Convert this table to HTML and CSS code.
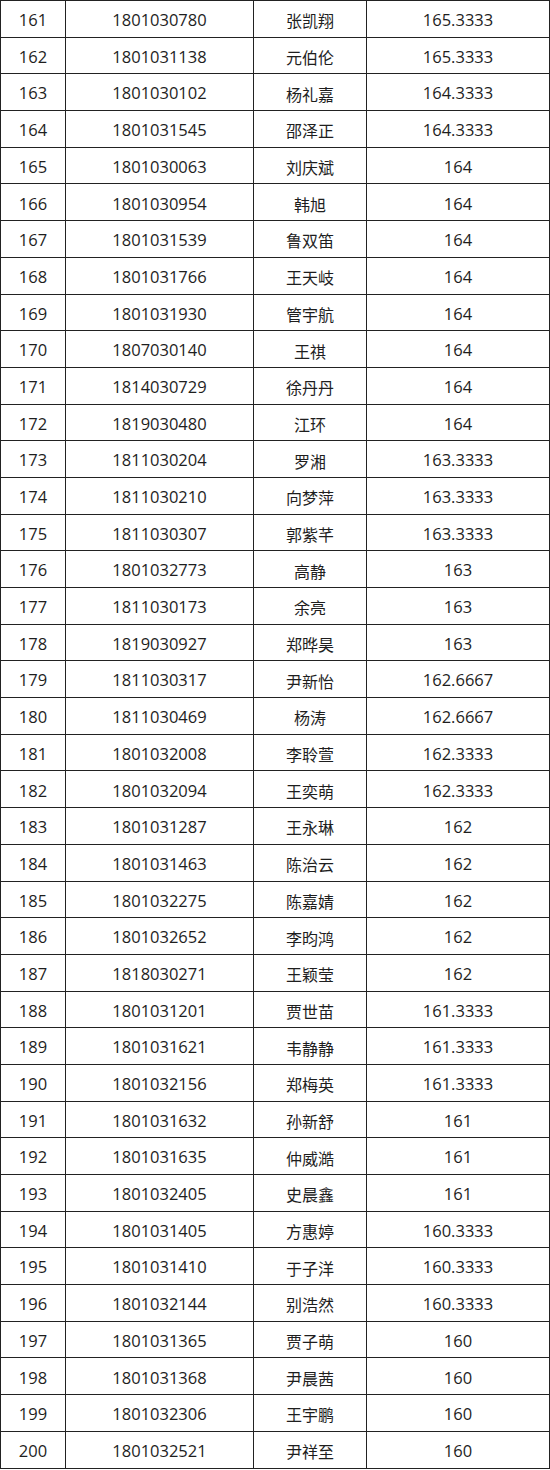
FILE: index.html
```html
<!DOCTYPE html>
<html lang="zh">
<head>
<meta charset="utf-8">
<link rel="stylesheet" href="styles.css">
</head>
<body>
<table class="score-table">
<colgroup>
<col class="c-rank"><col class="c-id"><col class="c-name"><col class="c-score">
</colgroup>
<tbody>
<tr><td>161</td><td>1801030780</td><td>张凯翔</td><td>165.3333</td></tr>
<tr><td>162</td><td>1801031138</td><td>元伯伦</td><td>165.3333</td></tr>
<tr><td>163</td><td>1801030102</td><td>杨礼嘉</td><td>164.3333</td></tr>
<tr><td>164</td><td>1801031545</td><td>邵泽正</td><td>164.3333</td></tr>
<tr><td>165</td><td>1801030063</td><td>刘庆斌</td><td>164</td></tr>
<tr><td>166</td><td>1801030954</td><td>韩旭</td><td>164</td></tr>
<tr><td>167</td><td>1801031539</td><td>鲁双笛</td><td>164</td></tr>
<tr><td>168</td><td>1801031766</td><td>王天岐</td><td>164</td></tr>
<tr><td>169</td><td>1801031930</td><td>管宇航</td><td>164</td></tr>
<tr><td>170</td><td>1807030140</td><td>王祺</td><td>164</td></tr>
<tr><td>171</td><td>1814030729</td><td>徐丹丹</td><td>164</td></tr>
<tr><td>172</td><td>1819030480</td><td>江环</td><td>164</td></tr>
<tr><td>173</td><td>1811030204</td><td>罗湘</td><td>163.3333</td></tr>
<tr><td>174</td><td>1811030210</td><td>向梦萍</td><td>163.3333</td></tr>
<tr><td>175</td><td>1811030307</td><td>郭紫芊</td><td>163.3333</td></tr>
<tr><td>176</td><td>1801032773</td><td>高静</td><td>163</td></tr>
<tr><td>177</td><td>1811030173</td><td>余亮</td><td>163</td></tr>
<tr><td>178</td><td>1819030927</td><td>郑晔昊</td><td>163</td></tr>
<tr><td>179</td><td>1811030317</td><td>尹新怡</td><td>162.6667</td></tr>
<tr><td>180</td><td>1811030469</td><td>杨涛</td><td>162.6667</td></tr>
<tr><td>181</td><td>1801032008</td><td>李聆萱</td><td>162.3333</td></tr>
<tr><td>182</td><td>1801032094</td><td>王奕萌</td><td>162.3333</td></tr>
<tr><td>183</td><td>1801031287</td><td>王永琳</td><td>162</td></tr>
<tr><td>184</td><td>1801031463</td><td>陈治云</td><td>162</td></tr>
<tr><td>185</td><td>1801032275</td><td>陈嘉婧</td><td>162</td></tr>
<tr><td>186</td><td>1801032652</td><td>李昀鸿</td><td>162</td></tr>
<tr><td>187</td><td>1818030271</td><td>王颖莹</td><td>162</td></tr>
<tr><td>188</td><td>1801031201</td><td>贾世苗</td><td>161.3333</td></tr>
<tr><td>189</td><td>1801031621</td><td>韦静静</td><td>161.3333</td></tr>
<tr><td>190</td><td>1801032156</td><td>郑梅英</td><td>161.3333</td></tr>
<tr><td>191</td><td>1801031632</td><td>孙新舒</td><td>161</td></tr>
<tr><td>192</td><td>1801031635</td><td>仲威澔</td><td>161</td></tr>
<tr><td>193</td><td>1801032405</td><td>史晨鑫</td><td>161</td></tr>
<tr><td>194</td><td>1801031405</td><td>方惠婷</td><td>160.3333</td></tr>
<tr><td>195</td><td>1801031410</td><td>于子洋</td><td>160.3333</td></tr>
<tr><td>196</td><td>1801032144</td><td>别浩然</td><td>160.3333</td></tr>
<tr><td>197</td><td>1801031365</td><td>贾子萌</td><td>160</td></tr>
<tr><td>198</td><td>1801031368</td><td>尹晨茜</td><td>160</td></tr>
<tr><td>199</td><td>1801032306</td><td>王宇鹏</td><td>160</td></tr>
<tr><td>200</td><td>1801032521</td><td>尹祥至</td><td>160</td></tr>
</tbody>
</table>
</body>
</html>
```

FILE: styles.css
```css
html, body {
  margin: 0;
  padding: 0;
  background: #ffffff;
}

.score-table {
  border-collapse: collapse;
  table-layout: fixed;
  width: 549px;
  font-family: "Open Sans", "Noto Sans CJK SC", sans-serif;
  font-size: 16.5px;
  color: #1e1e1e;
}

.c-rank { width: 65px; }
.c-id { width: 188px; }
.c-name { width: 113px; }
.c-score { width: 183px; }

.score-table td {
  border: 1px solid #222222;
  height: 32.7px;
  padding: 3px 0 0;
  text-align: center;
  vertical-align: middle;
  line-height: 1;
}

.score-table td:nth-child(3) {
  font-family: "Noto Sans CJK SC", sans-serif;
  font-size: 16px;
}
```
